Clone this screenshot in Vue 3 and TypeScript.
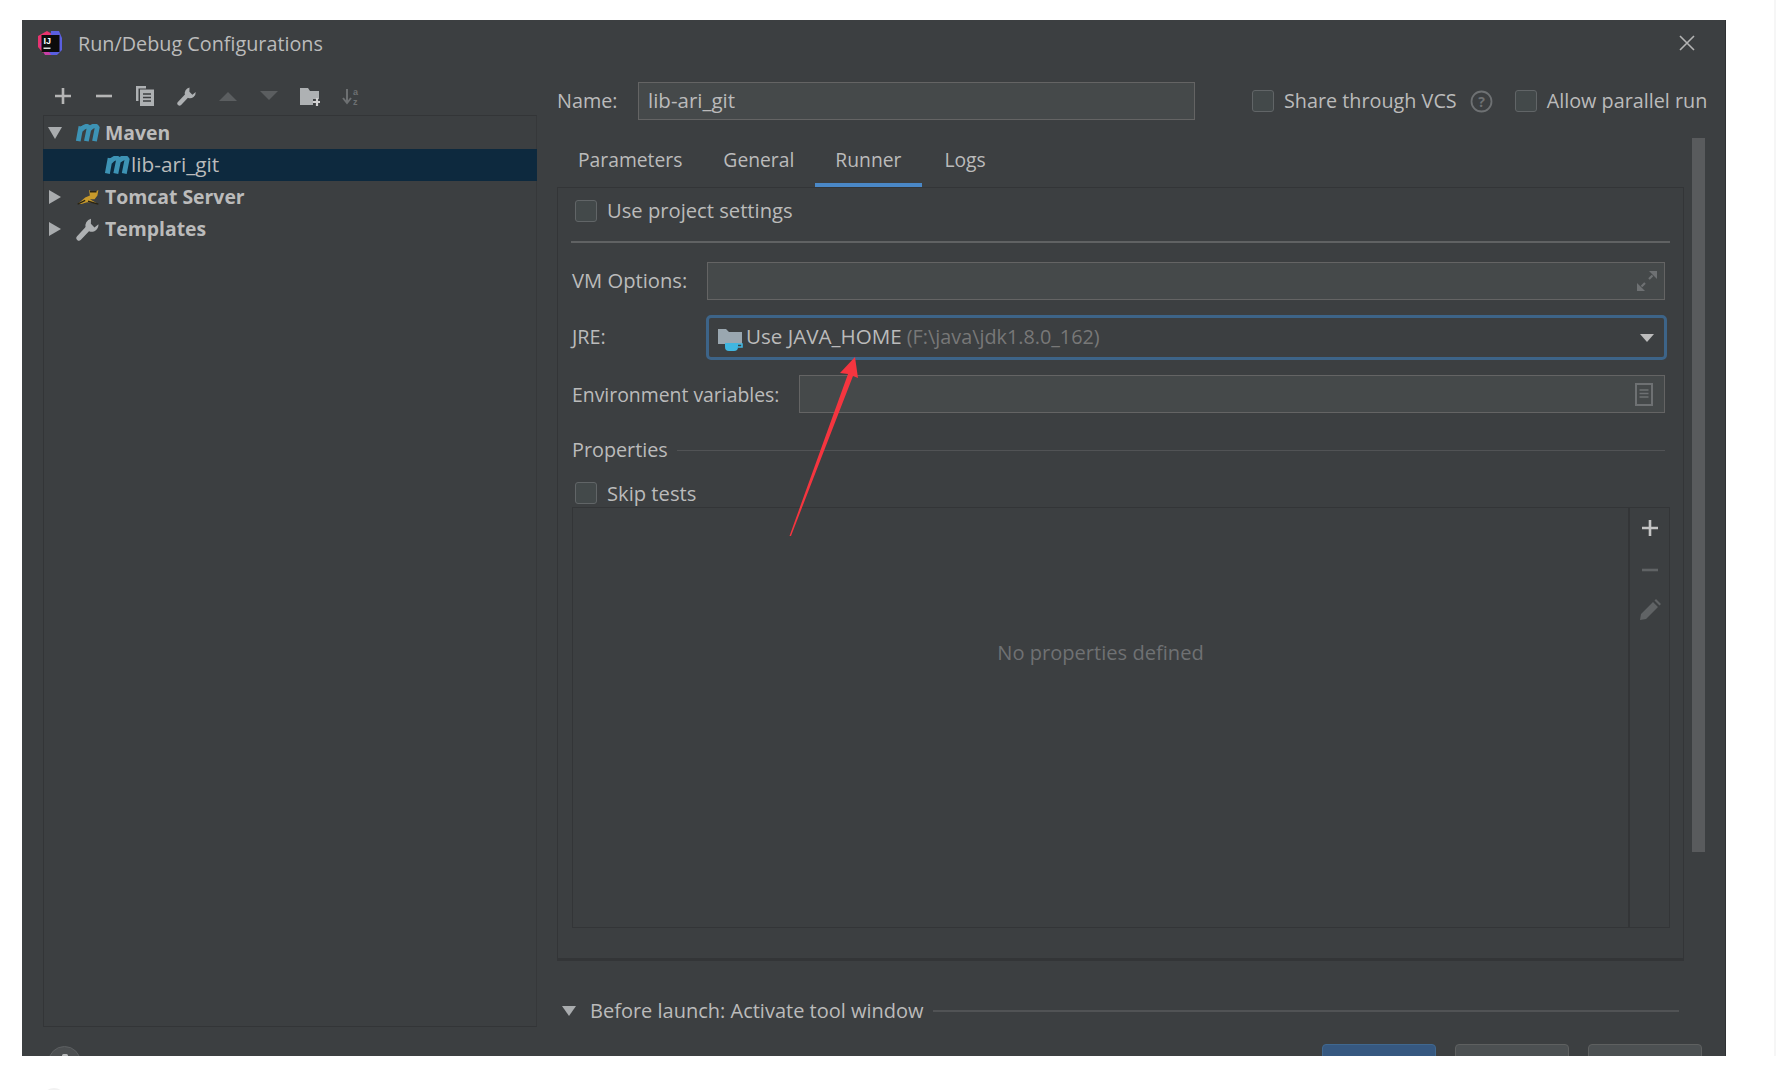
<script setup lang="ts">
const tabs: { label: string; active?: boolean }[] = [
  { label: 'Parameters' },
  { label: 'General' },
  { label: 'Runner', active: true },
  { label: 'Logs' },
]
</script>

<template>
  <div class="page">
    <div class="dialog">
      <header class="titlebar">
        <svg class="logo" width="26" height="26" viewBox="0 0 26 26">
          <path d="M1 6 L10 1 L15 4 L6 23 L1 17Z" fill="#e8336e" />
          <path d="M14 1 L22 1 L25 8 L25 20 L20 25 L12 25Z" fill="#5a5fe0" />
          <path d="M2 14 L8 25 L14 25 L6 12Z" fill="#c73fa6" />
          <rect x="4.5" y="5" width="18" height="17" fill="#0c0c0c" />
          <text x="6.5" y="14" class="logo-text">IJ</text>
          <rect x="6.5" y="17.5" width="7" height="1.5" fill="#ddd" />
        </svg>
        <span class="title">Run/Debug Configurations</span>
        <svg class="close" width="18" height="18" viewBox="0 0 18 18">
          <path d="M2 2 L16 16 M16 2 L2 16" stroke="#b4b4b4" stroke-width="1.6" fill="none" />
        </svg>
      </header>

      <div class="body">
        <aside class="left">
          <div class="toolbar">
            <svg class="tool" viewBox="0 0 20 20"><path d="M10 2v16M2 10h16" stroke="#b5b5b5" stroke-width="2.6" /></svg>
            <svg class="tool" viewBox="0 0 20 20"><path d="M2 10h16" stroke="#b5b5b5" stroke-width="2.6" /></svg>
            <svg class="tool" viewBox="0 0 20 20">
              <path d="M1 15V0h10v2.5H3.5V15z" fill="#aeb1b3" />
              <path d="M5 3.5h14V20H5z" fill="#aeb1b3" />
              <path d="M8 8h8M8 11.5h8M8 15h8" stroke="#3c3f41" stroke-width="1.4" />
            </svg>
            <svg class="tool" viewBox="0 0 20 20">
              <path d="M2.5 17.5 L10 9.5" stroke="#aeb1b3" stroke-width="4.4" stroke-linecap="round" />
              <path d="M12.5 1.5a5.8 5.8 0 0 0-4.4 7.6l3.2 3a5.8 5.8 0 0 0 7.4-6l-3.3 2.6-3-3z" fill="#aeb1b3" />
            </svg>
            <svg class="tool" viewBox="0 0 20 20"><path d="M1 15 L10 6 L19 15Z" fill="#5b5e60" /></svg>
            <svg class="tool" viewBox="0 0 20 20"><path d="M1 5 L19 5 L10 14Z" fill="#5b5e60" /></svg>
            <svg class="tool" viewBox="0 0 20 20">
              <path d="M0 2h8l2 3h9v8h-6v6H0z" fill="#aeb1b3" />
              <path d="M17 12v8M13 16h8" stroke="#d0d0d0" stroke-width="2.2" />
            </svg>
            <svg class="tool dim" viewBox="0 0 20 20">
              <path d="M6 3v13M2 12l4 5 4-5" stroke="#6d7072" stroke-width="2" fill="none" />
              <text x="12" y="9" class="az">a</text>
              <text x="12" y="19" class="az">z</text>
            </svg>
          </div>
          <div class="tree">
            <div class="node bold">
              <svg class="caret" viewBox="0 0 14 14"><path d="M0 1h14L7 13z" fill="#a9acae" /></svg>
              <svg class="mvn m-icon" viewBox="0 0 24 16"><path d="M3 15.5 L5.5 2 M5.5 5 Q11 -0.5 13 3.5 L10.5 15.5 M13.5 4 Q18.5 -0.5 20.5 3 L18 15.5" stroke="#3d93b5" stroke-width="4.4" fill="none" /></svg>
              <span>Maven</span>
            </div>
            <div class="node selected">
              <svg class="mvn child" viewBox="0 0 24 16"><path d="M3 15.5 L5.5 2 M5.5 5 Q11 -0.5 13 3.5 L10.5 15.5 M13.5 4 Q18.5 -0.5 20.5 3 L18 15.5" stroke="#3d93b5" stroke-width="4.4" fill="none" /></svg>
              <span>lib-ari_git</span>
            </div>
            <div class="node bold">
              <svg class="caret" viewBox="0 0 14 14"><path d="M1 0v14l12-7z" fill="#a9acae" /></svg>
              <svg class="mvn" viewBox="0 0 24 17">
                <path d="M1 16 L9 9 L14 7 L13 1 L16 3 L20 3 L23 1 L22 7 L19 11 L14 11 L21 15 L11 14 L5 16Z" fill="#c89a2b" />
                <path d="M1 16 L9 12 M12 13 L23 16 M14 3 L21 3" stroke="#2a2415" stroke-width="1.5" />
              </svg>
              <span>Tomcat Server</span>
            </div>
            <div class="node bold">
              <svg class="caret" viewBox="0 0 14 14"><path d="M1 0v14l12-7z" fill="#a9acae" /></svg>
              <svg class="mvn tall" viewBox="0 0 20 20">
                <path d="M2.5 17.5 L10 9.5" stroke="#aeb1b3" stroke-width="4.4" stroke-linecap="round" />
                <path d="M12.5 1.5a5.8 5.8 0 0 0-4.4 7.6l3.2 3a5.8 5.8 0 0 0 7.4-6l-3.3 2.6-3-3z" fill="#aeb1b3" />
              </svg>
              <span>Templates</span>
            </div>
          </div>
        </aside>

        <main class="right">
          <div class="name-row">
            <label class="name-label">Name:</label>
            <div class="input name-input"><span>lib-ari_git</span></div>
            <span class="check share"></span>
            <span class="share-text">Share through VCS</span>
            <svg class="help" width="23" height="23" viewBox="0 0 23 23">
              <circle cx="11.5" cy="11.5" r="10" stroke="#6e7173" stroke-width="1.8" fill="none" />
              <text x="11.5" y="16.5" class="q">?</text>
            </svg>
            <span class="check parallel"></span>
            <span class="parallel-text">Allow parallel run</span>
          </div>

          <div class="settings">
            <div class="settings-main">
              <nav class="tabs">
                <div v-for="t in tabs" :key="t.label" class="tab" :class="{ active: t.active }">{{ t.label }}</div>
              </nav>
              <section class="panel">
                <div class="check-row first"><span class="check"></span><span>Use project settings</span></div>
                <div class="sep"></div>
                <div class="field vm">
                  <label>VM Options:</label>
                  <div class="input grow icon-end">
                    <svg width="20" height="20" viewBox="0 0 20 20">
                      <path d="M12 0h8v8z M0 12v8h8z" fill="#6e7173" />
                      <path d="M15.5 4.5L12 8M8 12L4.5 15.5" stroke="#6e7173" stroke-width="2.2" />
                    </svg>
                  </div>
                </div>
                <div class="field jre">
                  <label>JRE:</label>
                  <div class="combo">
                    <svg class="jdk" width="25" height="24" viewBox="0 0 25 24">
                      <path d="M0 1h8l3 3h13v12H0z" fill="#9aa7b0" />
                      <path d="M7 15h13v4a4 4 0 0 1-4 4h-5a4 4 0 0 1-4-4z" fill="#40b6e0" />
                      <path d="M20 16h4v3h-4" stroke="#40b6e0" stroke-width="1.6" fill="none" />
                    </svg>
                    <span class="jre-main">Use JAVA_HOME</span>
                    <span class="jre-path">(F:\java\jdk1.8.0_162)</span>
                    <svg class="drop" width="14" height="8" viewBox="0 0 14 8"><path d="M0 0h14L7 8z" fill="#bcbcbc" /></svg>
                  </div>
                </div>
                <div class="field env">
                  <label>Environment variables:</label>
                  <div class="input grow icon-end env-input">
                    <svg width="18" height="23" viewBox="0 0 18 23">
                      <rect x="1" y="1" width="16" height="21" fill="none" stroke="#6e7173" stroke-width="2" />
                      <path d="M4.5 7h9M4.5 10.5h9M4.5 14h9" stroke="#6e7173" stroke-width="1.4" />
                    </svg>
                  </div>
                </div>
                <div class="props-head"><span>Properties</span><i></i></div>
                <div class="check-row skip"><span class="check"></span><span>Skip tests</span></div>
                <div class="table">
                  <div class="table-main">No properties defined</div>
                  <div class="table-side">
                    <svg width="18" height="18" viewBox="0 0 18 18"><path d="M9 1v16M1 9h16" stroke="#c4c4c4" stroke-width="2.6" /></svg>
                    <svg width="18" height="18" viewBox="0 0 18 18"><path d="M1 9h16" stroke="#606365" stroke-width="2.6" /></svg>
                    <svg class="pencil" width="22" height="22" viewBox="0 0 22 22"><path d="M1 21 L2 15 L14 3 L19 8 L7 20Z M15.5 1.5 L17 0 L22 5 L20.5 6.5Z" fill="#606365" /></svg>
                  </div>
                </div>
              </section>
            </div>
            <div class="scrollbar"></div>
          </div>

          <div class="before">
            <svg width="14" height="10" viewBox="0 0 14 10"><path d="M0 0h14L7 10z" fill="#a9acae" /></svg>
            <span>Before launch: Activate tool window</span>
            <i></i>
          </div>
        </main>
      </div>

      <footer class="footer">
        <div class="round-help"></div>
        <div class="btns">
          <div class="btn primary"></div>
          <div class="btn"></div>
          <div class="btn"></div>
        </div>
      </footer>

      <svg class="arrow" width="80" height="190" viewBox="0 0 80 190">
        <path d="M70 2 L73 23 L68 21 L6 181 L4.5 181 L63 19 L55 18Z" fill="#f5353f" />
      </svg>
    </div>
    <div class="edge-strip"></div>
    <div class="ghost-circle"></div>
  </div>
</template>

<style scoped>
.page {
  position: relative;
  width: 1776px;
  height: 1090px;
  background: #fff;
  padding: 20px 0 0 22px;
  box-sizing: border-box;
  overflow: hidden;
  font-family: "Open Sans", "Noto Sans", sans-serif;
  font-size: 19.8px;
  color: #bbbbbb;
}
.edge-strip {
  position: absolute;
  right: 0;
  top: 0;
  width: 2px;
  height: 1056px;
  background: #f6f6f6;
}
.ghost-circle {
  position: absolute;
  left: 42px;
  top: 1088px;
  width: 24px;
  height: 24px;
  border-radius: 50%;
  background: #f2f2f2;
}
.dialog {
  position: relative;
  width: 1704px;
  height: 1036px;
  background: #3c3f41;
  border-right: 1px solid #2f3133;
  box-sizing: border-box;
  overflow: hidden;
  display: flex;
  flex-direction: column;
}
.titlebar {
  height: 46px;
  flex: none;
  display: flex;
  align-items: center;
  padding: 0 29px 0 15px;
}
.logo { flex: none; }
.logo-text { font: 700 9px "Liberation Sans", sans-serif; fill: #fff; }
.title { margin-left: 15px; flex: 1; }
.body {
  display: flex;
  flex: none;
  height: 961px;
  padding-left: 21px;
}
.left { width: 494px; flex: none; display: flex; flex-direction: column; }
.toolbar {
  height: 49px;
  flex: none;
  display: flex;
  align-items: center;
  gap: 21.2px;
  padding: 10px 0 0 10px;
  box-sizing: border-box;
}
.tool { width: 20px; height: 20px; flex: none; }
.tree {
  flex: 1;
  border: 1px solid #333537;
  border-right-color: #36383a;
  box-sizing: border-box;
  padding-top: 1px;
}
.node {
  height: 32px;
  display: flex;
  align-items: center;
  padding-left: 5px;
  margin: 0 -1px;
}
.node span { padding-bottom: 2px; }
.node.bold { font-weight: 700; font-size: 19.4px; }
.node.selected { background: #0d293e; padding-left: 61px; font-size: 20.8px; }
.caret { width: 14px; height: 14px; flex: none; }
.mvn { width: 24px; height: 16px; flex: none; margin: 0 5px 0 14px; }
.m-icon { width: 26px; height: 18px; margin: 0 4px 0 13px; }
.mvn.child { width: 27px; height: 18px; margin: 0; }
.mvn.tall { height: 24px; }
.right { margin-left: 20px; flex: 1; min-width: 0; display: flex; flex-direction: column; }
.name-row { height: 38px; margin-top: 16px; display: flex; align-items: center; flex: none; white-space: nowrap; }
.name-row > span:not(.check), .name-row > label { padding-bottom: 2px; }
.name-label { width: 81px; flex: none; }
.input {
  background: #45494a;
  border: 1px solid #646464;
  box-sizing: border-box;
  height: 38px;
  display: flex;
  align-items: center;
}
.name-input { width: 557px; padding-left: 9px; flex: none; font-size: 20.5px; }
.name-input span { padding-bottom: 2px; }
.check {
  width: 22px;
  height: 22px;
  flex: none;
  box-sizing: border-box;
  background: #43494a;
  border: 1.5px solid #616567;
  border-radius: 3px;
  display: block;
}
.share { margin-left: 57px; }
.share-text { margin-left: 10px; }
.help { margin-left: 13px; flex: none; }
.q { font: 700 14px "Open Sans", sans-serif; fill: #6e7173; text-anchor: middle; }
.az { font: 700 9px "Liberation Sans", sans-serif; fill: #6d7072; }
.parallel { margin-left: 22px; }
.parallel-text { margin-left: 10px; }
.settings { flex: none; display: flex; height: 841px; }
.settings-main { width: 1127px; flex: none; display: flex; flex-direction: column; }
.tabs { height: 67px; flex: none; display: flex; align-items: flex-end; padding-left: 0.5px; }
.tab {
  height: 40px;
  padding: 0 20.5px;
  box-sizing: border-box;
  line-height: 26px;
  position: relative;
  font-size: 19.3px;
}
.tab + .active { margin-right: 2px; }
.tab.active::after {
  content: "";
  position: absolute;
  left: 0;
  right: 0;
  bottom: 0;
  height: 4px;
  background: #4a88c7;
}
.panel {
  width: 100%;
  height: 774px;
  box-sizing: border-box;
  flex: none;
  border: 1px solid #333537;
  border-width: 1px 1px 3px;
  padding: 12px 13px 0 14px;
  display: flex;
  flex-direction: column;
}
.check-row { display: flex; align-items: center; height: 22px; flex: none; padding-left: 3px; gap: 10px; }
.check-row span:last-child { padding-bottom: 1px; font-size: 20.2px; }
.first span:last-child { padding-bottom: 3px; }
.sep { height: 2px; background: #606263; margin: 19px 0 19px -1px; flex: none; }
.field { display: flex; align-items: center; flex: none; }
.field label { flex: none; padding-bottom: 3px; }
.vm { height: 38px; }
.vm label { width: 135px; font-size: 20.2px; }
.vm .input { margin-right: 5px; }
.env .input { margin-right: 5px; }
.grow { flex: 1; }
.icon-end { justify-content: flex-end; padding-right: 7px; }
.env-input { padding-right: 11px; }
.jre { height: 45px; margin-top: 15px; }
.jre label { width: 134px; }
.combo {
  flex: 1;
  height: 45px;
  margin-right: 3px;
  box-sizing: border-box;
  border: 3px solid #3d6488;
  border-radius: 5px;
  background: #3c3f41;
  display: flex;
  align-items: center;
  padding: 0 10px 0 9px;
}
.jdk { flex: none; margin: 4px 3px 0 0; }
.jre-main { font-size: 20.6px; padding-bottom: 3px; }
.jre-path { margin-left: 5px; color: #787878; flex: 1; padding-bottom: 3px; }
.drop { flex: none; }
.env { height: 38px; margin-top: 15px; }
.env label { width: 227px; font-size: 19.4px; padding-bottom: 0; }
.props-head { display: flex; align-items: center; height: 26px; margin-top: 24px; flex: none; }
.props-head span { padding-bottom: 2px; }
.props-head i { flex: 1; height: 1px; background: #515355; margin: 0 5px 0 9px; }
.skip { margin-top: 19px; }
.table {
  height: 421px;
  flex: none;
  margin-top: 3px;
  border: 1px solid #333537;
  box-sizing: border-box;
  display: flex;
}
.table-main {
  flex: 1;
  text-align: center;
  padding-top: 131px;
  color: #6f7173;
  border-right: 2px solid #333537;
  box-sizing: border-box;
  font-size: 20.1px;
}
.table-side {
  width: 39px;
  flex: none;
  display: flex;
  flex-direction: column;
  align-items: center;
  padding-top: 11px;
  gap: 24px;
  box-sizing: border-box;
}
.pencil { margin-top: -4px; }
.scrollbar { width: 13px; height: 714px; margin: 18px 0 0 8px; background: #595b5d; flex: none; }
.before { display: flex; align-items: center; height: 28px; margin-top: 36px; flex: none; padding-left: 5px; font-size: 20px; }
.before span { margin-left: 14px; padding-bottom: 2px; }
.before i { width: 746px; height: 2px; background: #515355; margin-left: 9px; }
.footer {
  display: flex;
  justify-content: space-between;
  padding: 17px 23px 0 26px;
  flex: none;
}
.round-help {
  position: relative;
  width: 33px;
  height: 33px;
  margin-top: 2px;
  border-radius: 50%;
  background: #4c4f51;
  border: 1px solid #5d6062;
  box-sizing: border-box;
}
.round-help::after {
  content: "";
  position: absolute;
  left: 13px;
  top: 7px;
  width: 6px;
  height: 3px;
  border-radius: 2px;
  background: #b8babb;
}
.btns { display: flex; gap: 19px; }
.btn {
  width: 114px;
  height: 40px;
  border-radius: 4px;
  box-sizing: border-box;
  background: #4c5052;
  border: 1.5px solid #5e6060;
}
.btn.primary { background: #365880; border-color: #40688f; }
.arrow { position: absolute; left: 763px; top: 335px; }
</style>

<style>
body { background: #fff; }
</style>
